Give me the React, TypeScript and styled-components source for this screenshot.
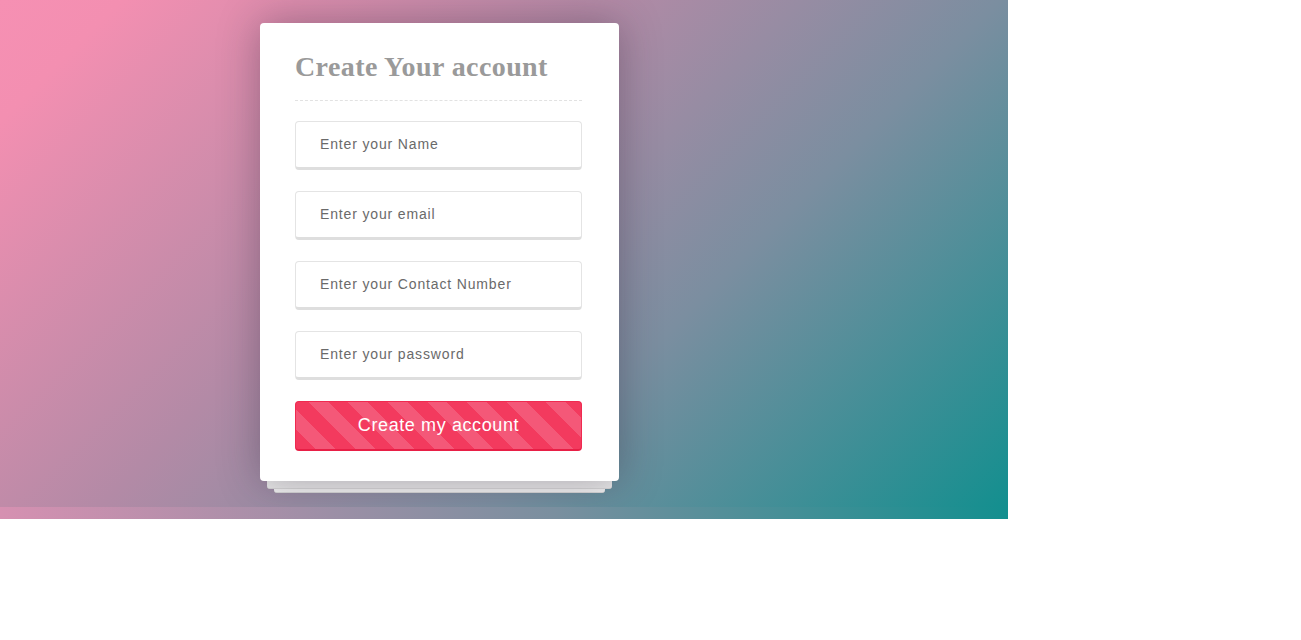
import React from "react";
import styled, { createGlobalStyle } from "styled-components";

const Global = createGlobalStyle`
  html, body { margin: 0; padding: 0; background: #fff; }
  body { font-family: "Liberation Sans", Arial, sans-serif; }
  * { box-sizing: border-box; }
`;

const gradient = `linear-gradient(135deg, #f690b3 0%, #f38fb1 8%, #b38aa6 40%, #7b8ea0 66%, #138f8f 100%)`;

const Page = styled.div`
  width: 1008px;
  display: flex;
  flex-direction: column;
`;

const Hero = styled.section`
  height: 507px;
  padding: 23px 0 0 260px;
  background: ${gradient};
  overflow: hidden;
`;

const Strip = styled.div`
  height: 12px;
  background: linear-gradient(90deg, #d690b1 0%, #9c8fa6 33%, #7a8f9f 55%, #138f8f 100%);
`;

const Stack = styled.div`
  width: 359px;
  display: flex;
  flex-direction: column;
`;

const Card = styled.form`
  background: #fff;
  border-radius: 4px;
  padding: 27px 37px 30px 35px;
  box-shadow: 0 0 40px rgba(40, 30, 50, 0.35);
  display: flex;
  flex-direction: column;
  position: relative;
  z-index: 2;
`;

const Sheet = styled.div<{ $inset: number; $h: number; $bg: string }>`
  margin: 0 ${(p) => p.$inset}px;
  height: ${(p) => p.$h}px;
  background: ${(p) => p.$bg};
  border-radius: 0 0 3px 3px;
  border-bottom: 1px solid #d8d8d8;
`;

const Title = styled.h1`
  margin: 0 0 20px;
  font-family: "Liberation Serif", "Times New Roman", serif;
  font-weight: bold;
  font-size: 28px;
  letter-spacing: 0.4px;
  line-height: 34px;
  color: #9a9a9a;
  padding-bottom: 16px;
  border-bottom: 1px dashed #e2e2e2;
`;

const Fields = styled.div`
  display: flex;
  flex-direction: column;
  gap: 21px;
`;

const Input = styled.input`
  width: 100%;
  height: 49px;
  padding: 0 0 1px 24px;
  border: 1px solid #e4e4e4;
  border-bottom: 3px solid #dedede;
  border-radius: 4px;
  font-family: "Liberation Sans", Arial, sans-serif;
  font-size: 14px;
  letter-spacing: 0.85px;
  color: #555;
  outline: none;
  background: #fff;
  &::placeholder {
    color: #6a6a6a;
  }
`;

const Button = styled.button`
  margin-top: 21px;
  height: 50px;
  width: 100%;
  border: 1px solid #ef2a50;
  border-bottom: 2px solid #e81f46;
  border-radius: 4px;
  color: #fff;
  font-family: "Liberation Sans", Arial, sans-serif;
  font-size: 18px;
  letter-spacing: 0.6px;
  background-color: #f33a5e;
  background-image: repeating-linear-gradient(
    45deg,
    #f33a5e 0px,
    #f33a5e 14px,
    #f45878 14px,
    #f45878 28px
  );
  cursor: pointer;
`;

export default function App() {
  return (
    <>
      <Global />
      <Page>
        <Hero>
          <Stack>
            <Card onSubmit={(e) => e.preventDefault()}>
              <Title>Create Your account</Title>
              <Fields>
                <Input type="text" placeholder="Enter your Name" />
                <Input type="email" placeholder="Enter your email" />
                <Input type="text" placeholder="Enter your Contact Number" />
                <Input type="password" placeholder="Enter your password" />
              </Fields>
              <Button type="submit">Create my account</Button>
            </Card>
            <Sheet $inset={7} $h={8} $bg="#e9e9e9" />
            <Sheet $inset={14} $h={4} $bg="#f2f2f2" />
          </Stack>
        </Hero>
        <Strip />
      </Page>
    </>
  );
}
